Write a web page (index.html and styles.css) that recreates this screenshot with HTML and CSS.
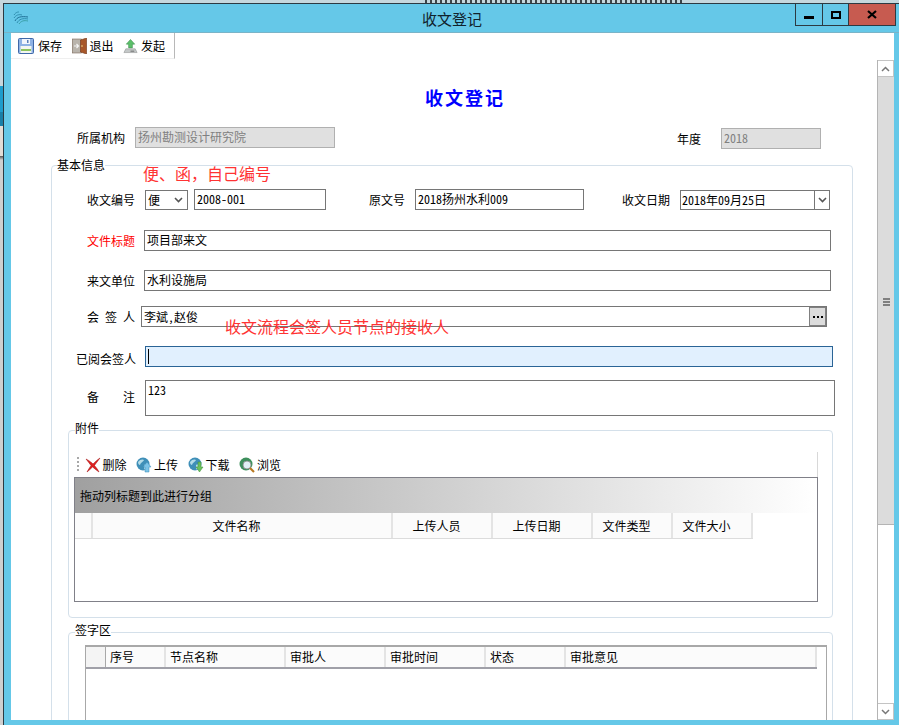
FILE: index.html
```html
<!DOCTYPE html>
<html lang="zh-CN">
<head>
    <meta charset="UTF-8">
    <title>收文登记</title>
    <link rel="stylesheet" href="styles.css">
</head>
<body>
    <div class="desktop-strip"></div>
    <div class="window">
        <div class="titlebar">
            <svg class="app-icon" width="16" height="14" viewBox="0 0 16 14" fill="none" stroke-width="1">
                <path d="M1 4C3 1 5 1 6 1" stroke="#2f8fb0"/>
                <path d="M1 7C3 4 6 3 9 4" stroke="#2f8fb0"/>
                <path d="M2 10C4 6 8 5 15 6" stroke="#1f6f96"/>
                <path d="M4 12C6 8 10 7 15 8" stroke="#2f8fb0"/>
                <path d="M6 13C8 10 11 9 15 10" stroke="#3aa0a8"/>
            </svg>
            <div class="window-title">收文登记</div>
            <div class="window-buttons">
                <div class="win-btn win-min"><span></span></div>
                <div class="win-btn win-max"><span></span></div>
                <div class="win-btn win-close">
                    <svg width="10" height="9" viewBox="0 0 10 9"><path d="M1 1L9 8M9 1L1 8" stroke="#000" stroke-width="2.2"/></svg>
                </div>
            </div>
        </div>
        <div class="client">
            <div class="main-toolbar">
                <div class="tool">
                    <svg width="16" height="16" viewBox="0 0 16 16">
                        <rect x=".5" y=".5" width="15" height="15" rx="1" fill="#8fb2e4" stroke="#3f68a8"/>
                        <rect x="4" y="1" width="8" height="5" fill="#f2f5fb"/>
                        <rect x="9" y="2" width="1.500" height="3" fill="#5a7fb8"/>
                        <rect x="2.500" y="8" width="11" height="7" fill="#f4f6f0"/>
                        <rect x="3" y="11" width="10" height="2" fill="#8cc45c"/>
                    </svg>
                    <span>保存</span>
                </div>
                <div class="tool tool-tight">
                    <svg width="15" height="16" viewBox="0 0 15 16">
                        <rect x=".3" y="1" width="9" height="14" fill="#b9b4ac" stroke="#7c6a5c" stroke-width=".6"/>
                        <path d="M2 8H6M4.500 6L6.500 8L4.500 10" stroke="#f4f4f4" stroke-width="1.200" fill="none"/>
                        <path d="M8.500 2L14.500 0V16L8.500 14Z" fill="#a8572a" stroke="#6e3315" stroke-width=".6"/>
                        <rect x="9.500" y="7" width="1" height="2" fill="#f0d080"/>
                    </svg>
                    <span>退出</span>
                </div>
                <div class="tool tool-tight">
                    <svg width="15" height="16" viewBox="0 0 16 16">
                        <path d="M8 1L12.500 6H10V10H6V6H3.500Z" fill="#5cbf6a" stroke="#3c8f4c" stroke-width=".6"/>
                        <path d="M3 11H13L15 15H1Z" fill="#c4c8c8" stroke="#8e9292" stroke-width=".6"/>
                        <rect x="8" y="13" width="4" height="1" fill="#666"/>
                    </svg>
                    <span>发起</span>
                </div>
            </div>
            <div class="client-body">
                <div class="form-scroll">
                    <div class="doc-title">收文登记</div>
                    <div class="org-row">
                        <div class="label org-label">所属机构</div>
                        <div class="field disabled org-field">扬州勘测设计研究院</div>
                        <div class="label year-label">年度</div>
                        <div class="field disabled year-field">2018</div>
                    </div>

                    <fieldset class="group basic-group">
                        <legend>基本信息</legend>
                        <div class="group-body">
                            <div class="note note-type">便、函，自己编号</div>
                            <div class="note note-sign">收文流程会签人员节点的接收人</div>

                            <div class="row row-first">
                                <div class="label">收文编号</div>
                                <div class="field combo type-combo">
                                    <span class="combo-text">便</span>
                                    <svg width="9" height="6" viewBox="0 0 9 6"><path d="M1 1L4.500 4.500L8 1" stroke="#555" stroke-width="1.600" fill="none"/></svg>
                                </div>
                                <div class="field no-field">2008-001</div>
                                <div class="label origin-label">原文号</div>
                                <div class="field origin-field">2018扬州水利009</div>
                                <div class="label date-label">收文日期</div>
                                <div class="field combo date-combo">
                                    <span class="combo-text">2018年09月25日</span>
                                    <span class="date-drop">
                                        <svg width="9" height="6" viewBox="0 0 9 6"><path d="M1 1L4.500 4.500L8 1" stroke="#555" stroke-width="1.600" fill="none"/></svg>
                                    </span>
                                </div>
                            </div>
                            <div class="row row-title">
                                <div class="label label-red">文件标题</div>
                                <div class="field wide-field">项目部来文</div>
                            </div>
                            <div class="row row-unit">
                                <div class="label">来文单位</div>
                                <div class="field wide-field">水利设施局</div>
                            </div>
                            <div class="row row-sign">
                                <div class="label">会&ensp;签&ensp;人</div>
                                <div class="field sign-field">
                                    <span class="sign-text">李斌,赵俊</span>
                                    <span class="more-btn">
                                        <svg width="10" height="2" viewBox="0 0 10 2"><path d="M0 0h2v2H0zM4 0h2v2H4zM8 0h2v2H8z" fill="#000"/></svg>
                                    </span>
                                </div>
                            </div>
                            <div class="row row-read">
                                <div class="label read-label">已阅会签人</div>
                                <div class="field focus-field"><span class="caret"></span></div>
                            </div>
                            <div class="row row-memo">
                                <div class="label memo-label">备　　注</div>
                                <div class="field memo-field">123</div>
                            </div>

                            <fieldset class="group sub-group attach-group">
                                <legend>附件</legend>
                                <div class="attach-toolbar">
                                    <span class="grip"></span>
                                    <div class="tool">
                                        <svg width="16" height="16" viewBox="0 0 16 16"><path d="M1 2C5 4 7 6 8 7C10 5 12 3 15 1C13 4 11 6 9.500 8.500C11 10.500 13 12.500 14 15C11 13 9 11 7.500 10C6 11.500 4 13.500 2 15C3 12.500 5 10.500 6 8.500C4.500 6.500 3 4.500 1 2Z" fill="#e02020" stroke="#a01010" stroke-width=".5"/></svg>
                                        <span>删除</span>
                                    </div>
                                    <div class="tool">
                                        <svg width="16" height="16" viewBox="0 0 16 16">
                                            <circle cx="7" cy="7" r="6.500" fill="#3f8fb8"/>
                                            <path d="M2 5C4 2 7 2 8 3C7 5 5 5 4 8C3 8 2 7 2 5ZM8 8C10 7 12 8 12 9C11 12 9 13 8 12Z" fill="#b4dce8"/>
                                            <path d="M11 5L15 10H13V15H9V10H7Z" fill="#7cc4e8" stroke="#3a88b4" stroke-width=".5"/>
                                        </svg>
                                        <span>上传</span>
                                    </div>
                                    <div class="tool">
                                        <svg width="16" height="16" viewBox="0 0 16 16">
                                            <circle cx="7" cy="7" r="6.500" fill="#3f8fb8"/>
                                            <path d="M2 5C4 2 7 2 8 3C7 5 5 5 4 8C3 8 2 7 2 5ZM8 8C10 7 12 8 12 9C11 12 9 13 8 12Z" fill="#b4dce8"/>
                                            <path d="M10 5H13V10H15L11.500 15L8 10H10Z" fill="#6cc05c" stroke="#3f8f3c" stroke-width=".5"/>
                                        </svg>
                                        <span>下载</span>
                                    </div>
                                    <div class="tool">
                                        <svg width="16" height="16" viewBox="0 0 16 16">
                                            <circle cx="7" cy="7" r="6.500" fill="#3d8f5c"/>
                                            <circle cx="8" cy="8" r="4" fill="#dff0f4" stroke="#888" stroke-width=".8"/>
                                            <path d="M11 11L15 15" stroke="#b87820" stroke-width="2.200"/>
                                        </svg>
                                        <span>浏览</span>
                                    </div>
                                </div>
                                <div class="grid attach-grid">
                                    <div class="group-panel">拖动列标题到此进行分组</div>
                                    <div class="grid-head">
                                        <div class="cell cell-center col-ind">&nbsp;</div>
                                        <div class="cell cell-center col-300">文件名称</div>
                                        <div class="cell cell-center col-100">上传人员</div>
                                        <div class="cell cell-center col-100">上传日期</div>
                                        <div class="cell cell-center col-80">文件类型</div>
                                        <div class="cell cell-center col-80">文件大小</div>
                                    </div>
                                </div>
                            </fieldset>

                            <fieldset class="group sub-group sign-group">
                                <legend>签字区</legend>
                                <div class="grid sign-grid">
                                    <div class="grid-head sign-head">
                                        <div class="cell col-sign-ind">&nbsp;</div>
                                        <div class="cell col-60">序号</div>
                                        <div class="cell col-120">节点名称</div>
                                        <div class="cell col-100">审批人</div>
                                        <div class="cell col-100">审批时间</div>
                                        <div class="cell col-80">状态</div>
                                        <div class="cell col-rest">审批意见</div>
                                    </div>
                                </div>
                            </fieldset>
                        </div>
                    </fieldset>
                </div>
                <div class="scrollbar">
                    <div class="scroll-btn">
                        <svg width="9" height="6" viewBox="0 0 9 6"><path d="M1 5L4.500 1.500L8 5" stroke="#777" stroke-width="1.500" fill="none"/></svg>
                    </div>
                    <div class="scroll-thumb"><span></span><span></span><span></span></div>
                    <div class="scroll-track"></div>
                    <div class="scroll-btn">
                        <svg width="9" height="6" viewBox="0 0 9 6"><path d="M1 1L4.500 4.500L8 1" stroke="#777" stroke-width="1.500" fill="none"/></svg>
                    </div>
                </div>
            </div>
        </div>
    </div>
</body>
</html>
```

FILE: styles.css
```css
/* base */
* {
    box-sizing: border-box;
}

body {
    margin: 0;
    width: 899px;
    height: 725px;
    overflow: hidden;
    font-family: "Noto Sans CJK SC", "Liberation Sans", sans-serif;
    font-feature-settings: "hwid";
    font-size: 12px;
    line-height: 17px;
    color: #000;
    background: linear-gradient(to bottom,
        #c8d6dc 0, #c8d6dc 86px,
        #1e9ccc 86px, #1e9ccc 112px,
        #1a7fa8 112px, #1a7fa8 126px,
        #e2dcd6 126px, #e2dcd6 156px,
        #555 156px, #cfcfcf 160px, #cfcfcf 725px);
}

.desktop-strip {
    height: 3px;
    background: repeating-linear-gradient(to right, #3a4448 0, #3a4448 2px, transparent 2px, transparent 5px) 425px 0 / 258px 3px no-repeat, #c5d8de;
}

/* window frame */
.window {
    height: 722px;
    margin-left: 3px;
    display: flex;
    flex-direction: column;
    background: #65c8e8;
    border-left: 1px solid #2c3a42;
    border-top: 1px solid #2c3a42;
}

.titlebar {
    height: 29px;
    flex: none;
    display: grid;
    grid-template-columns: 1fr auto 1fr;
    align-items: start;
    border-bottom: 1px solid #7ab4c8;
}

.app-icon {
    margin: 7px 0 0 9px;
}

.window-title {
    margin-left: 1px;
    padding-top: 5px;
    font-size: 15px;
    line-height: 20px;
    color: #10222c;
}

.window-buttons {
    justify-self: end;
    display: flex;
    margin-right: 3px;
    height: 22px;
    border: 1px solid #2c3a42;
    border-top: none;
}

.win-btn {
    display: flex;
    align-items: center;
    justify-content: center;
    border-right: 1px solid #2c3a42;
}

.win-min {
    width: 27px;
}

.win-min span {
    width: 10px;
    height: 3px;
    margin-top: 5px;
    background: #000;
}

.win-max {
    width: 26px;
}

.win-max span {
    width: 10px;
    height: 8px;
    border: 2px solid #000;
}

.win-close {
    width: 46px;
    border-right: none;
    background: #c75b50;
}

.client {
    flex: 1;
    min-height: 0;
    margin: 0 5px 5px 7px;
    display: flex;
    flex-direction: column;
    background: #fff;
}

/* toolbars */
.main-toolbar {
    flex: none;
    width: 164px;
    height: 26px;
    display: flex;
    align-items: center;
    gap: 9.5px;
    padding: 0 0 0 7px;
    border-right: 1px solid #b8b8b8;
    border-bottom: 1px solid #efefef;
}

.tool {
    display: flex;
    align-items: center;
    gap: 4px;
    white-space: nowrap;
}

.tool-tight {
    gap: 3px;
}

.client-body {
    flex: 1;
    min-height: 0;
    display: flex;
}

.form-scroll {
    flex: 1;
    min-width: 0;
    overflow: hidden;
}

/* scrollbar */
.scrollbar {
    flex: none;
    width: 17px;
    margin-top: 1px;
    display: flex;
    flex-direction: column;
    border-left: 1px solid #b4b4b4;
}

.scroll-btn {
    height: 17px;
    flex: none;
    display: flex;
    align-items: center;
    justify-content: center;
    background: #fff;
    border: 1px solid #c4c4c4;
    border-left: none;
}

.scroll-thumb {
    height: 448px;
    flex: none;
    display: flex;
    flex-direction: column;
    align-items: center;
    justify-content: center;
    gap: 1px;
    padding-top: 2px;
    background: #dcdcdc;
    border-bottom: 1px solid #b4b4b4;
}

.scroll-thumb span {
    width: 7px;
    height: 2px;
    background: #808080;
}

.scroll-track {
    flex: 1;
}

/* form head */
.doc-title {
    margin-top: 27px;
    padding-left: 414px;
    font-size: 18px;
    line-height: 22px;
    font-weight: bold;
    letter-spacing: 2px;
    color: #0000ff;
}

.org-row {
    margin-top: 19px;
    padding-left: 66px;
    display: flex;
    align-items: flex-start;
    height: 22px;
}

.label {
    flex: none;
    width: 48px;
    text-align: right;
    white-space: nowrap;
}

.label-red {
    color: #ff0000;
}

.org-label {
    margin-top: 2px;
}

.year-label {
    margin: 3px 0 0 342px;
    width: 24px;
}

.field {
    flex: none;
    height: 21px;
    padding-left: 2px;
    border: 1px solid #767676;
    background: #fff;
    white-space: nowrap;
    overflow: hidden;
}

.disabled {
    background: #e0e0e0;
    border-color: #b0b0b0;
    color: #808080;
}

.org-field {
    width: 200px;
    margin-left: 10px;
}

.year-field {
    width: 100px;
    margin: 1px 0 0 20px;
}

/* groups */
.group {
    margin: 0;
    padding: 0;
    min-width: 0;
    border: 1px solid #d4e0ea;
    border-radius: 4px;
}

.group legend {
    padding: 0;
    line-height: 16px;
}

.basic-group {
    width: 802px;
    margin: 8px 0 0 40px;
    height: 700px;
}

.basic-group > legend {
    margin-left: 5px;
}

.group-body {
    position: relative;
}

/* red remarks lie over the form rows */
.note {
    position: absolute;
    font-size: 16px;
    line-height: 20px;
    font-feature-settings: normal;
    color: #ff3333;
    white-space: nowrap;
}

.note-type {
    left: 91px;
    top: -10px;
}

.note-sign {
    left: 173px;
    top: 143px;
}

/* rows */
.row {
    display: flex;
    align-items: center;
    padding-left: 35px;
}

.row-first {
    padding-top: 16px;
}

.row-title {
    margin-top: 20px;
}

.row-unit {
    margin-top: 19px;
}

.row-sign {
    margin-top: 15px;
}

.row-read {
    margin-top: 18px;
    padding-left: 24px;
}

.row-memo {
    margin-top: 13px;
    align-items: flex-start;
}

.read-label {
    width: 59px;
    padding-top: 5px;
}

.memo-label {
    margin-top: 8px;
    font-feature-settings: normal;
}

.combo {
    display: flex;
    align-items: center;
}

.combo-text {
    flex: 1;
    align-self: flex-start;
}

.type-combo {
    width: 43px;
    height: 20px;
    margin-left: 10px;
    padding-right: 4px;
}

.no-field {
    width: 132px;
    margin-left: 6px;
}

.origin-label {
    width: 36px;
    margin-left: 43px;
}

.origin-field {
    width: 169px;
    margin-left: 10px;
}

.date-label {
    margin-left: 38px;
}

.date-combo {
    width: 150px;
    height: 20px;
    margin-left: 10px;
    padding-left: 1px;
}

.date-drop {
    width: 15px;
    height: 100%;
    display: flex;
    align-items: center;
    justify-content: center;
    border-left: 1px solid #767676;
}

.wide-field {
    width: 687px;
    margin-left: 9px;
}

.sign-field {
    width: 686px;
    margin-left: 6px;
    display: flex;
    padding-right: 0;
}

.sign-text {
    flex: 1;
    padding-top: 1px;
}

.more-btn {
    width: 18px;
    margin: -1px -1px -1px 0;
    display: flex;
    align-items: center;
    justify-content: center;
    background: #dcdcdc;
    border: 2px solid #808080;
    border-left-width: 1px;
}

.focus-field {
    width: 688px;
    margin-left: 10px;
    background: #e1f0fe;
    border-color: #2a6496;
    display: flex;
    align-items: center;
}

.caret {
    width: 1px;
    height: 15px;
    background: #000;
}

.memo-field {
    width: 690px;
    height: 36px;
    margin-left: 10px;
}

/* sub groups */
.sub-group {
    width: 765px;
    margin-left: 16px;
}

.sub-group legend {
    margin-left: 6px;
    padding-bottom: 4px;
}

.attach-group {
    margin-top: 4px;
    padding-bottom: 15px;
}

.attach-toolbar {
    width: 744px;
    height: 25px;
    margin: 12px 0 0 5px;
    display: flex;
    align-items: center;
    gap: 9.5px;
    padding-left: 3px;
    border-right: 1px solid #d8d8d8;
}

.grip {
    width: 2px;
    height: 16px;
    margin-right: -4px;
    background: repeating-linear-gradient(to bottom, #a8a8a8 0, #a8a8a8 2px, transparent 2px, transparent 4px);
}

.attach-toolbar .tool {
    gap: 2px;
}

.grid {
    background: #fff;
    border: 1px solid #808088;
}

.attach-grid {
    width: 744px;
    height: 125px;
    margin-left: 5px;
}

.group-panel {
    height: 35px;
    padding-left: 5px;
    line-height: 35px;
    background: linear-gradient(to right, #a0a0a0, #ffffff);
}

.grid-head {
    display: flex;
    height: 26px;
    background: #fbfbfb;
    border-bottom: 1px solid #dcdcdc;
    width: 678px;
}

.cell {
    flex: none;
    border-right: 2px solid #e4e4e4;
    line-height: 25px;
    padding-left: 4px;
    white-space: nowrap;
}

.cell-center {
    text-align: center;
    padding: 0 11px 0 0;
}

.col-ind {
    width: 18px;
    padding: 0;
}

.col-300 {
    width: 300px;
}

.col-100 {
    width: 100px;
}

.col-80 {
    width: 80px;
}

.sign-group {
    margin-top: 4px;
    height: 200px;
}

.sign-grid {
    width: 742px;
    height: 120px;
    margin: 3px 0 0 16px;
    border-color: #a8a8a8;
    border-top-width: 2px;
}

.sign-head {
    width: 731px;
    height: 22px;
    border-bottom: 2px solid #a0a0a8;
}

.sign-head .cell {
    line-height: 20px;
}

.col-sign-ind {
    width: 20px;
    background: #f4f4f4;
    border-right: 1px solid #a8a8a8;
}

.col-60 {
    width: 60px;
}

.col-120 {
    width: 120px;
}

.col-rest {
    flex: 1;
}
```
